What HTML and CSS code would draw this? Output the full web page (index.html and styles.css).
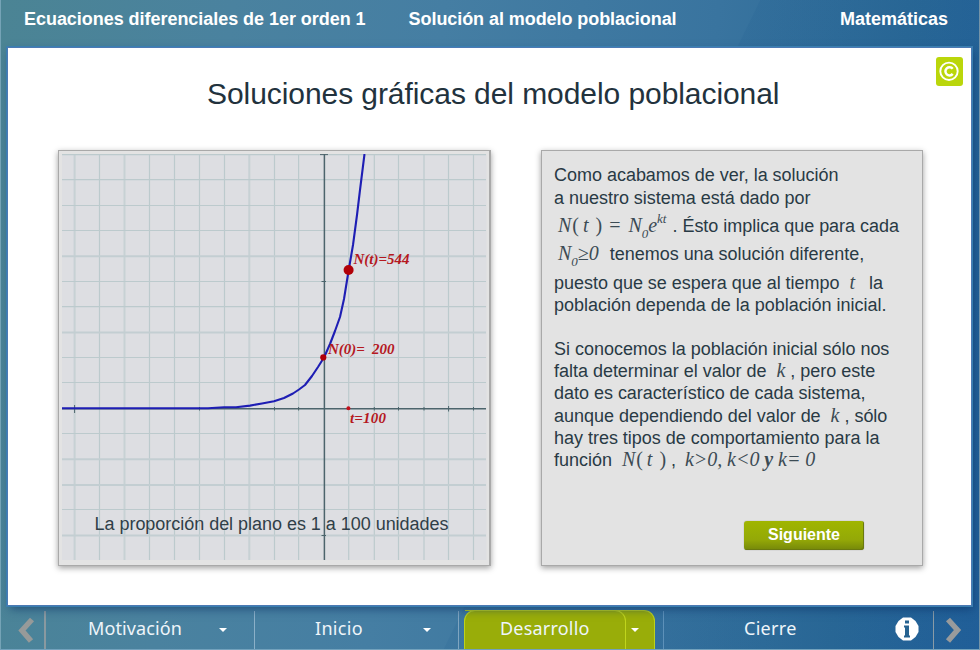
FILE: index.html
```html
<!DOCTYPE html>
<html lang="es">
<head>
<meta charset="utf-8">
<title>Soluciones gráficas del modelo poblacional</title>
<link rel="stylesheet" href="styles.css">
</head>
<body>
<div class="app">
  <header class="top">
    <span class="course">Ecuaciones diferenciales de 1er orden 1</span>
    <span class="topic">Solución al modelo poblacional</span>
    <span class="subject">Matemáticas</span>
  </header>
  <main class="stage">
    <div class="credit">
      <svg width="27" height="29" viewBox="0 0 27 29"><circle cx="13" cy="14.3" r="8.7" fill="none" stroke="#fff" stroke-width="1.9"/><path d="M16.7 11.7A4.1 4.1 0 1 0 16.7 16.9" fill="none" stroke="#fff" stroke-width="2.5"/></svg>
    </div>
    <h1>Soluciones gráficas del modelo poblacional</h1>
    <div class="panels">
      <section class="panel chart">
        <svg width="425" height="406" viewBox="62 154 425 406">
          <rect x="61.5" y="154" width="425" height="406" fill="#dddee2"/>
          <g fill="none" stroke="#bccacd">
            <path stroke-width="1.2" d="M99.5 154V560M149.5 154V560M174.5 154V560M199.5 154V560M224.5 154V560M274.5 154V560M298.6 154V560M348.7 154V560M374.3 154V560M398.5 154V560M424 154V560M448.5 154V560M473.5 154V560"/>
            <path stroke-width="2" stroke="#c7d1d4" d="M74.6 154V560M124.5 154V560M249.3 154V560"/>
            <path stroke-width="1.2" d="M61.5 154.6H486M61.5 179.6H486M61.5 205.5H486M61.5 230.5H486M61.5 281.5H486M61.5 306.6H486M61.5 357.5H486M61.5 382.5H486M61.5 433.5H486M61.5 509.5H486"/>
            <path stroke-width="2" stroke="#c3ced2" d="M61.5 256.3H486M61.5 332.6H486M61.5 459.2H486M61.5 485H486M61.5 535.6H486"/>
          </g>
          <path stroke="#4c646c" stroke-width="1.5" fill="none" d="M324.4 154V560M61.5 408.7H486"/>
          <path stroke="#4c646c" fill="none" d="M320 154.6H328M321.5 281.5H326M321.5 535.5H326M74.6 405V413M199.5 407V410.5M448.6 406V411.5M274.5 407V410.5M298.6 407V410.5M374.3 407V410.5M398.5 407V410.5M424 407V410.5M473.5 407V410.5"/>
          <path stroke="#1e1eb4" stroke-width="2.1" fill="none" stroke-linejoin="round" d="M61.5 408.2H208L224 407.3H236L250 405.6L262 403.5L274 401.2L284 398L293 393.5L299 389.5L305 385L312 376L318 367L324 357.5L330 344L335 331L340 317L344 299L348.7 270L353 245L357 215L360 190L364.5 154"/>
          <circle cx="348.6" cy="270" r="5" fill="#b10008"/>
          <circle cx="323.3" cy="357.4" r="3.1" fill="#b10008"/>
          <circle cx="348.4" cy="408.2" r="2" fill="#c2101c"/>
          <g class="math-label">
            <text x="353.5" y="264" textLength="56">N(t)=544</text>
            <text x="328" y="354.3" textLength="66.5" xml:space="preserve">N(0)=  200</text>
            <text x="350" y="423.3" textLength="36">t=100</text>
          </g>
          <text class="scale" x="94.5" y="530" textLength="354">La proporción del plano es 1 a 100 unidades</text>
        </svg>
      </section>
      <section class="panel copy">
        <div class="line">Como acabamos de ver, la solución</div>
        <div class="line">a nuestro sistema está dado por</div>
        <div class="line tall f1"><i>N</i><i class="par">(</i><i class="var-t">t</i><i class="par">)</i><i class="eq">=</i><i>N</i><i class="sub">0</i><i>e</i><i class="sup">kt</i><span class="rest">. Ésto implica que para cada</span></div>
        <div class="line tall f2"><i>N</i><i class="sub">0</i><i class="ge">≥0</i><span class="rest">tenemos una solución diferente,</span></div>
        <div class="line tall">puesto que se espera que al tiempo <i class="gap-t">t</i> la</div>
        <div class="line">población dependa de la población inicial.</div>
        <div class="line blank"></div>
        <div class="line">Si conocemos la población inicial sólo nos</div>
        <div class="line">falta determinar el valor de <i class="k">k</i> , pero este</div>
        <div class="line">dato es característico de cada sistema,</div>
        <div class="line">aunque dependiendo del valor de <i class="k">k</i> , sólo</div>
        <div class="line">hay tres tipos de comportamiento para la</div>
        <div class="line f3">función <i class="fn">N</i><i class="par">(</i><i class="var-t">t</i><i class="par">)</i> , <i class="cases">k&gt;0, k&lt;0 <b>y</b> k= 0</i></div>
        <button class="next">Siguiente</button>
      </section>
    </div>
  </main>
  <nav class="bottom">
    <div class="arrow prev"><svg width="20" height="28" viewBox="0 0 20 28"><path d="M16 4.5L6 15.5L15 26" fill="none" stroke="#979a99" stroke-width="5.5"/></svg></div>
    <div class="item motivation"><span>Motivación</span><b class="caret"></b></div>
    <div class="item start"><span>Inicio</span><b class="caret"></b></div>
    <div class="tab"><div class="tab-main"><span>Desarrollo</span></div><div class="tab-more"><b class="caret"></b></div></div>
    <div class="item end"><span>Cierre</span></div>
    <div class="info"><svg width="24" height="24" viewBox="0 0 24 24"><path d="M8 .5H16L20.5 4L23.5 9V15L20.5 20L16 23.5H8L3.5 20L.5 15V9L3.5 4Z" fill="#fff"/><path d="M10 3.5H14V6.5H10ZM9 8.5H14V18.5H15V20.5H9V18.5H10V10.5H9Z" fill="#276391"/></svg></div>
    <div class="arrow nextarrow"><svg width="20" height="28" viewBox="0 0 20 28"><path d="M3 4.5L12.5 15L3 26" fill="none" stroke="#999b9c" stroke-width="5.5"/></svg></div>
  </nav>
</div>
</body>
</html>
```
FILE: styles.css
```css
* { box-sizing: border-box; }
body { margin: 0; font-family: "Liberation Sans", Arial, sans-serif; }
.app {
  width: 980px; height: 650px; overflow: hidden;
  display: flex; flex-direction: column;
  border-left: 1px solid #75a3b6; border-right: 1px solid #7594a8; border-bottom: 1px solid #73a2bd;
  background:
    linear-gradient(116deg, transparent 58.6%, rgba(10, 74, 130, .09) 58.7%),
    linear-gradient(97deg, #4b8494 0%, #4a829f 22%, #457ea3 42%, #39749f 68%, #2b6997 86%, #22609a 100%);
}
.top {
  height: 48px; flex: none; display: flex; padding: 9px 31px 0 23px;
  color: #fff; font-size: 18px; font-weight: bold; line-height: 21px; white-space: nowrap;
}
.course, .topic { letter-spacing: -.04px; }
.topic { margin-left: 43px; letter-spacing: -.07px; }
.subject { margin-left: auto; }
.stage {
  position: relative; width: 963px; height: 557px; flex: none; margin-left: 7px;
  background: #fff; box-shadow: 0 0 0 1px #4c79b3, 0 0 0 2px #397fb0, 2px 4px 9px rgba(10, 46, 100, .6);
}
.credit {
  position: absolute; right: 8px; top: 9px; width: 27px; height: 29px;
  border-radius: 3px; background: #bad60b;
}
.credit svg { display: block; }
h1 {
  margin: 0; padding: 29px 0 0 199px; height: 102px; white-space: nowrap;
  color: #22323d; font-size: 30px; line-height: 34px; font-weight: normal; letter-spacing: -.07px;
}
.panels { display: flex; gap: 50px; padding-left: 50px; }
.panel {
  height: 416px; background: #e3e3e3; border: 1px solid #a9a9a9;
  box-shadow: 0 2px 6px rgba(0, 0, 0, .38);
}
.chart { width: 433px; padding: 3px 0 0 3px; border-width: 1px 2px 1px 1px; }
.chart svg { display: block; }
.math-label { font: italic bold 15px "Liberation Serif", serif; fill: #b5181f; }
.scale { font-size: 18px; fill: #303f48; }
.copy {
  width: 382px; padding: 13.4px 0 0 12px; color: #293a45; font-size: 18px; letter-spacing: -.02px;
  display: flex; flex-direction: column;
}
.line { height: 22.3px; line-height: 22.3px; white-space: pre; }
.line.tall { height: 28.5px; line-height: 34px; }
.line.blank { height: 21px; }
.line i { font-family: "Liberation Serif", serif; font-size: 20px; line-height: 1; color: #3c4b54; }
.f1 i:first-child, .f2 i:first-child { margin-left: 4px; }
.line .par { font-style: normal; margin-left: 1px; }
.line .var-t { margin: 0 6px 0 4px; }
.line .eq { margin: 0 8px 0 7px; font-style: normal; }
.line .sub { font-size: 13px; position: relative; top: 6px; }
.line .sup { font-size: 13px; position: relative; top: -9px; }
.f1 .rest { margin-left: 6px; }
.f2 .rest { margin-left: 11px; }
.gap-t { margin: 0 9px 0 5px; }
.k { margin-left: 5px; }
.fn { margin-left: 5px; }
.line .cases { margin-left: 4px; letter-spacing: -.05px; }
.next {
  width: 120px; height: 29px; margin: 49.6px 0 0 190px; padding: 0 0 2px;
  border: 0; border-radius: 3px; color: #fff; font: bold 16px "Liberation Sans", Arial, sans-serif; letter-spacing: 0;
  background: linear-gradient(#a0b500, #97ad05 45%, #94a807 65%, #75880a);
  box-shadow: inset -1px -1px #6a790f, 0 0 1px #777;
}
.bottom {
  flex: 1; display: flex; align-items: stretch; padding-top: 6px;
  font-family: "Noto Sans", "Open Sans", sans-serif; font-size: 18px; line-height: 24px; color: #eef5fa;
}
.arrow { flex: none; }
.prev { width: 45px; padding: 4px 0 0 15px; border-right: 2px solid #8999a0; }
.item { display: flex; padding-top: 5px; }
.motivation { width: 209px; padding-left: 42px; letter-spacing: .1px; border-right: 1px solid #8bb0c8; }
.start { width: 204px; padding-left: 60px; letter-spacing: .3px; border-right: 1px solid #7fa5c0; }
.caret { width: 0; height: 0; margin: 12px 27px 0 auto; border: 4px solid transparent; border-top: 4px solid #fff; border-bottom: 0; }
.tab {
  width: 191px; height: 40px; margin: -1px 8px 0 5px; display: flex; letter-spacing: .2px;
  border: 1px solid #bdd21c; border-bottom: 0; border-radius: 11px 11px 0 0; background: #99ad09;
}
.tab-main { width: 161px; padding: 5px 0 0 35px; border-right: 1px solid #c0d51c; border-top: 1px solid #bdd21c; margin-top: -1px; border-radius: 0 11px 0 0; }
.tab-more { display: flex; }
.tab-more .caret { margin: 17px 0 0 5px; }
.end { width: 232px; padding-left: 80px; letter-spacing: .3px; border-left: 1px solid #5d91b9; }
.info { width: 38px; padding-top: 6px; }
.info svg { display: block; }
.nextarrow { padding: 4px 0 0 11px; border-left: 1px solid #899ba6; }
```
